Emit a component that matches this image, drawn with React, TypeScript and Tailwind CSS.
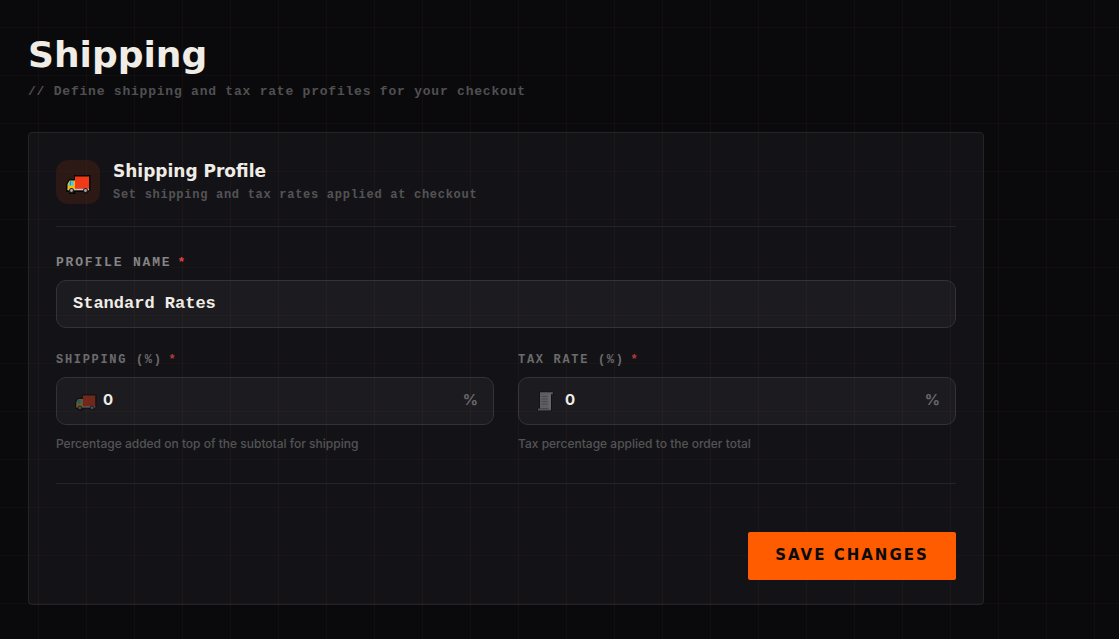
import type { ReactNode } from 'react';

function TruckIcon({ className }: { className?: string }) {
  return (
    <svg viewBox="0 0 25 19" className={className} aria-hidden="true">
      <path
        d="M8 0h16.500v15.500h-1.500a3.200 3.200 0 0 1-6 1.500h-7.500a3.200 3.200 0 0 1-6.500 0h-3v-8l3-5h5z"
        fill="#050505"
      />
      <path d="M9 1.500h14v13H9z" fill="#f03a17" />
      <path d="M3.600 5.500H9v9H1.500V9z" fill="#ffb900" />
      <path d="M3.900 6h3.800v4.500H2z" fill="#3ccbf4" />
      <path d="M4.300 6h.7v4.500h-.7z" fill="#1b7fa0" />
      <path d="M1.500 13.800H23v1.500H1.500z" fill="#c4c4c4" />
      <circle cx="5.500" cy="15.500" r="2.500" fill="#222" />
      <circle cx="5.500" cy="15.500" r="1.400" fill="#a8a8a8" />
      <circle cx="19.500" cy="15.500" r="2.500" fill="#222" />
      <circle cx="19.500" cy="15.500" r="1.400" fill="#a8a8a8" />
    </svg>
  );
}

function ReceiptIcon({ className }: { className?: string }) {
  return (
    <svg viewBox="0 0 17 21" className={className} aria-hidden="true">
      <path d="M2 .5h14.500v3.500H15V20.500H.3v-3.500H2z" fill="#050505" />
      <path d="M3 1.200h12.800v2H14V17.500H3z" fill="#c3c3c7" />
      <path d="M1 17.500h13v2H1z" fill="#aaaaae" />
      <path d="M11.500 3.200H14v15h-2.500z" fill="#d6d6d8" />
      <path
        d="M4.500 5.500h6M4.500 8h6M4.500 10.500h6M4.500 13h6"
        stroke="#8b8b90"
        strokeWidth="1"
      />
    </svg>
  );
}

interface RateFieldProps {
  id: string;
  label: string;
  hint: string;
  icon: ReactNode;
}

function RateField({ id, label, hint, icon }: RateFieldProps) {
  return (
    <div>
      <label
        htmlFor={id}
        className="mb-2 flex gap-1.5 font-['Liberation_Mono',monospace] text-xs leading-[18px] font-bold tracking-[0.14em] text-[#6b6b6d] uppercase"
      >
        {label}
        <span className="text-[#b83a3a]">*</span>
      </label>
      <div className="relative">
        <span className="absolute inset-y-0 left-[19px] flex items-center opacity-40">
          {icon}
        </span>
        <input
          id={id}
          type="text"
          inputMode="decimal"
          defaultValue="0"
          aria-describedby={`${id}-hint`}
          className="block h-12 w-full rounded-[10px] border border-[#333337] bg-[#1c1c20] pr-10 pb-1 pl-[46px] text-[15px] font-bold text-[#f0ede6] outline-none"
        />
        <span className="absolute inset-y-0 right-4 flex items-center pb-0.5 text-[15px] font-bold text-[#68686b]">
          %
        </span>
      </div>
      <p
        id={`${id}-hint`}
        className="mt-[10px] text-xs leading-[18px] font-medium text-[#535356]"
      >
        {hint}
      </p>
    </div>
  );
}

export default function App() {
  return (
    <div className="relative min-h-screen bg-[#0a0a0d] px-7 pt-8 pb-8 font-['Inter',sans-serif] text-[#f0ede6]">
      <div className="pointer-events-none absolute inset-0 z-10 bg-[linear-gradient(90deg,rgba(255,90,0,0.05)_1px,transparent_1px),linear-gradient(rgba(255,110,40,0.03)_1px,transparent_1px)] bg-[length:48px_48px] bg-[position:38px_27px]" />

      <header className="mb-[30px]">
        <h1 className="font-['DejaVu_Sans',sans-serif] text-[36px] leading-[46px] font-bold">
          Shipping
        </h1>
        <p className="mt-1 font-['Liberation_Mono',monospace] text-[13px] leading-5 font-bold tracking-[0.06em] text-[#505052]">
          // Define shipping and tax rate profiles for your checkout
        </p>
      </header>

      <main className="max-w-[956px] rounded-sm border border-[#242428] bg-[#131317] px-[27px] pt-[27px] pb-6">
        <div className="flex items-center gap-[13px] border-b border-[#242428] pb-[22px]">
          <div className="flex size-11 shrink-0 items-center justify-center rounded-xl bg-[#2c1814]">
            <TruckIcon className="mt-1 h-[19px] w-[25px]" />
          </div>
          <div>
            <h2 className="font-['DejaVu_Sans',sans-serif] text-[17px] leading-[22px] font-bold">
              Shipping Profile
            </h2>
            <p className="mt-1 font-['Liberation_Mono',monospace] text-xs leading-[18px] font-bold tracking-[0.06em] text-[#535356]">
              Set shipping and tax rates applied at checkout
            </p>
          </div>
        </div>

        <form onSubmit={(e) => e.preventDefault()}>
          <div className="pt-[27px]">
            <label
              htmlFor="profile-name"
              className="mb-2 flex gap-1.5 font-['Liberation_Mono',monospace] text-[13px] leading-[18px] font-bold tracking-[0.14em] text-[#858585] uppercase"
            >
              Profile Name
              <span className="text-[#e04040]">*</span>
            </label>
            <input
              id="profile-name"
              type="text"
              defaultValue="Standard Rates"
              className="block h-12 w-full rounded-[10px] border border-[#333337] bg-[#1c1c20] px-4 pb-0.5 font-['Liberation_Mono',monospace] text-[17px] font-bold text-[#f0ede6] outline-none"
            />
          </div>

          <div className="mt-[23px] grid grid-cols-1 gap-6 sm:grid-cols-2">
            <RateField
              id="shipping-rate"
              label="Shipping (%)"
              hint="Percentage added on top of the subtotal for shipping"
              icon={<TruckIcon className="mt-0.5 h-[17px] w-[22px]" />}
            />
            <RateField
              id="tax-rate"
              label="Tax Rate (%)"
              hint="Tax percentage applied to the order total"
              icon={<ReceiptIcon className="h-[21px] w-[17px]" />}
            />
          </div>

          <div className="mt-[30px] flex justify-end border-t border-[#242428] pt-12">
            <button
              type="submit"
              className="relative z-20 h-12 w-52 rounded-xs bg-[#ff5c00] pb-0.5 font-['DejaVu_Sans',sans-serif] text-[15px] font-bold tracking-[2px] text-[#0a0a0d] uppercase"
            >
              Save Changes
            </button>
          </div>
        </form>
      </main>
    </div>
  );
}
